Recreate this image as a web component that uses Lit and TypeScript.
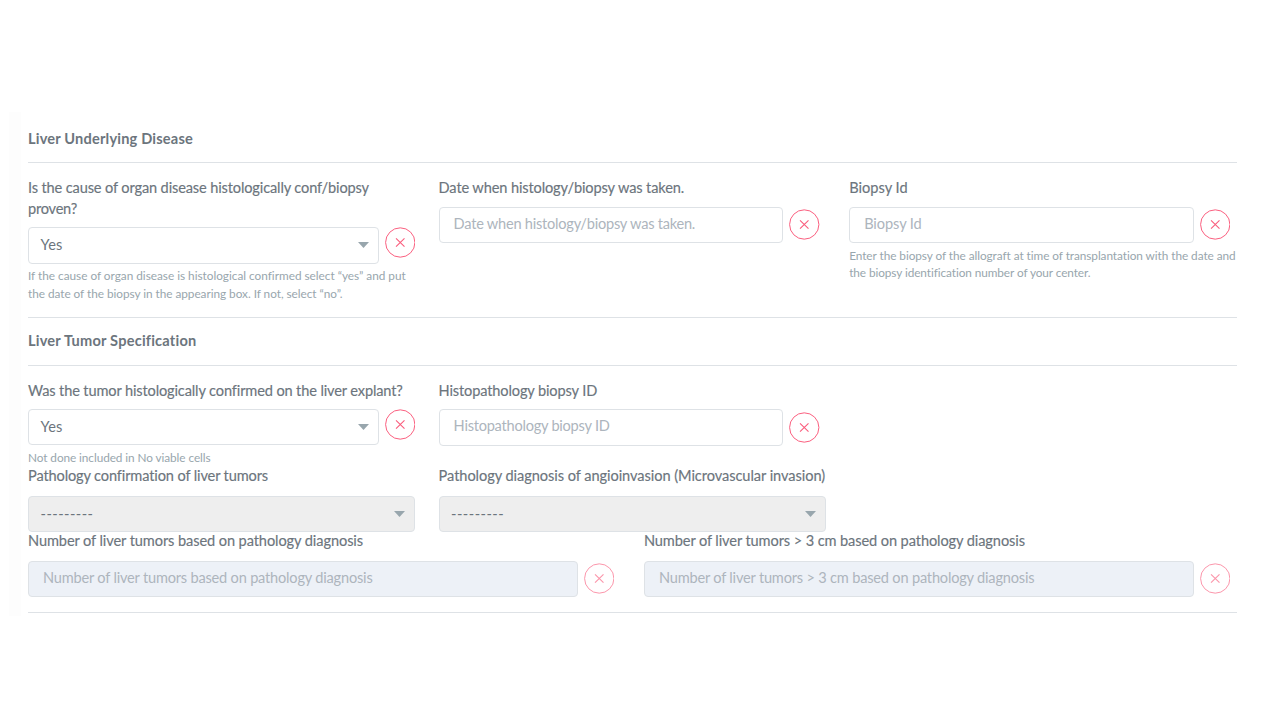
import { LitElement, html, css, nothing } from "lit";
import { customElement, property, state } from "lit/decorators.js";
import { styleMap } from "lit/directives/style-map.js";

type Line = [text: string, width: number];

interface Field {
  label: Line[];
  kind: "select" | "input";
  value: Line;
  help?: Line[];
  disabled?: boolean;
  clearable?: boolean;
}

/* A single line of text, tracked so that it fills the given width. */
@customElement("fit-line")
class FitLine extends LitElement {
  static styles = css`
    :host { display: block; white-space: nowrap; }
    .text { display: inline-block; }
  `;
  @property() text = "";
  @property({ type: Number }) width = 0;
  @state() private tracking = 0;

  firstUpdated() {
    const el = this.renderRoot.querySelector(".text") as HTMLElement;
    const natural = el.getBoundingClientRect().width;
    this.tracking = (this.width - natural) / this.text.length;
  }

  render() {
    return html`<span class="text" style=${styleMap({ letterSpacing: `${this.tracking}px` })}>${this.text}</span>`;
  }
}

@customElement("form-field")
class FormField extends LitElement {
  static styles = css`
    :host { display: block; min-width: 0; }
    .label { font-size: 14.6px; line-height: 21px; color: #6c757d; -webkit-text-stroke: 0.15px #6c757d; margin-bottom: 8.5px; }
    .label.select { margin-bottom: 8px; }
    .label.disabled { margin-bottom: 9.5px; }
    .control { display: flex; gap: 6px; align-items: center; }
    .control.select { align-items: flex-start; }
    .box {
      box-sizing: border-box; height: 36.5px; flex: 1; display: flex; align-items: center;
      justify-content: space-between; border: 1px solid #dee2e6; border-radius: 4px;
      background: #fff; font-size: 14.6px; line-height: 34px;
    }
    .select .box { padding: 0 9px 0 11.5px; color: #6c757d; }
    .input .box { padding: 0 14px; color: #adb5bd; }
    .input .box fit-line { margin-top: -2px; }
    .input .clear { margin-right: 6px; }
    .select.disabled .box { background: #eee; }
    .input.disabled .box { background: #edf1f7; }
    .caret { width: 11px; height: 6px; fill: #98a6ad; display: block; }
    .clear { width: 30.5px; height: 31px; flex: none; display: block; fill: none; stroke: #fa5c7c; }
    .disabled .clear { opacity: 0.65; }
    .help { margin-top: 3.5px; font-size: 11.8px; line-height: 17.5px; color: #98a6ad; }
  `;
  @property({ attribute: false }) field!: Field;

  render() {
    const f = this.field;
    const tone = `${f.kind} ${f.disabled ? "disabled" : ""}`;
    const line = ([text, width]: Line) => html`<fit-line .text=${text} .width=${width}></fit-line>`;
    return html`
      <div class="label ${tone}">${f.label.map(line)}</div>
      <div class="control ${tone}">
        <div class="box">
          ${line(f.value)}
          ${f.kind === "select" ? html`<svg class="caret" viewBox="0 0 11 6"><path d="M0 0h11L5.5 6z" /></svg>` : nothing}
        </div>
        ${f.clearable === false ? nothing : html`
          <svg class="clear" viewBox="0 0 31 31">
            <circle cx="15.5" cy="15.5" r="14.9" stroke-width="1" />
            <path d="M11.2 11.2l8.6 8.6M19.8 11.2l-8.6 8.6" stroke-width="1.1" />
          </svg>`}
      </div>
      ${f.help ? html`<div class="help">${f.help.map(line)}</div>` : nothing}
    `;
  }
}

const disease: Field[] = [
  {
    label: [["Is the cause of organ disease histologically conf/biopsy", 341], ["proven?", 49]],
    kind: "select",
    value: ["Yes", 22],
    help: [
      ["If the cause of organ disease is histological confirmed select “yes” and put", 377.5],
      ["the date of the biopsy in the appearing box. If not, select “no”.", 314.5],
    ],
  },
  {
    label: [["Date when histology/biopsy was taken.", 245.5]],
    kind: "input",
    value: ["Date when histology/biopsy was taken.", 241.5],
  },
  {
    label: [["Biopsy Id", 58.5]],
    kind: "input",
    value: ["Biopsy Id", 57.5],
    help: [
      ["Enter the biopsy of the allograft at time of transplantation with the date and", 386.5],
      ["the biopsy identification number of your center.", 241.5],
    ],
  },
];

const tumor: Field[] = [
  {
    label: [["Was the tumor histologically confirmed on the liver explant?", 374.5]],
    kind: "select",
    value: ["Yes", 22],
    help: [["Not done included in No viable cells", 182.5]],
  },
  {
    label: [["Histopathology biopsy ID", 158.5]],
    kind: "input",
    value: ["Histopathology biopsy ID", 156],
  },
];

const pathology: Field[] = [
  {
    label: [["Pathology confirmation of liver tumors", 240]],
    kind: "select", value: ["---------", 53], disabled: true, clearable: false,
  },
  {
    label: [["Pathology diagnosis of angioinvasion (Microvascular invasion)", 386.5]],
    kind: "select", value: ["---------", 53], disabled: true, clearable: false,
  },
];

const counts: Field[] = [
  {
    label: [["Number of liver tumors based on pathology diagnosis", 335]],
    kind: "input", value: ["Number of liver tumors based on pathology diagnosis", 329.5], disabled: true,
  },
  {
    label: [["Number of liver tumors > 3 cm based on pathology diagnosis", 381]],
    kind: "input", value: ["Number of liver tumors > 3 cm based on pathology diagnosis", 375.5], disabled: true,
  },
];

@customElement("app-root")
class AppRoot extends LitElement {
  static styles = css`
    :host {
      display: flex; box-sizing: border-box; width: 1280px; height: 720px; overflow: hidden;
      padding: 112px 43px 0 9px; background: #fff; font-family: Lato, "Open Sans", sans-serif;
    }
    .edge { width: 12px; height: 504px; background: #fdfdfd; flex: none; }
    .form { flex: 1; margin-left: 7px; }
    .title { height: 50px; display: flex; align-items: center; padding-top: 2px; box-sizing: border-box; font-size: 14.6px; font-weight: 700; color: #6c757d; }
    .title.second { height: 47px; padding: 0 0 2px; }
    .rule { height: 1px; background: #dee2e6; }
    .row { display: grid; width: 1208.3px; gap: 23.5px; align-items: start; }
    .row.three { grid-template-columns: repeat(3, minmax(0, 1fr)); }
    .row.two { grid-template-columns: repeat(2, minmax(0, 1fr)); }
    .row.first { height: 140px; padding-top: 14px; }
    .row.second { height: 85.5px; padding-top: 13.5px; }
    .row.third { height: 65px; }
    .row.last { height: 82px; }
  `;

  private row(fields: Field[], classes: string) {
    return html`<div class="row ${classes}">${fields.map((f) => html`<form-field .field=${f}></form-field>`)}</div>`;
  }

  render() {
    return html`
      <div class="edge"></div>
      <main class="form">
        <div class="title"><fit-line .text=${"Liver Underlying Disease"} .width=${165}></fit-line></div>
        <div class="rule"></div>
        ${this.row(disease, "three first")}
        <div class="rule"></div>
        <div class="title second"><fit-line .text=${"Liver Tumor Specification"} .width=${168.5}></fit-line></div>
        <div class="rule"></div>
        ${this.row(tumor, "three second")}
        ${this.row(pathology, "three third")}
        ${this.row(counts, "two last")}
        <div class="rule"></div>
      </main>
    `;
  }
}
